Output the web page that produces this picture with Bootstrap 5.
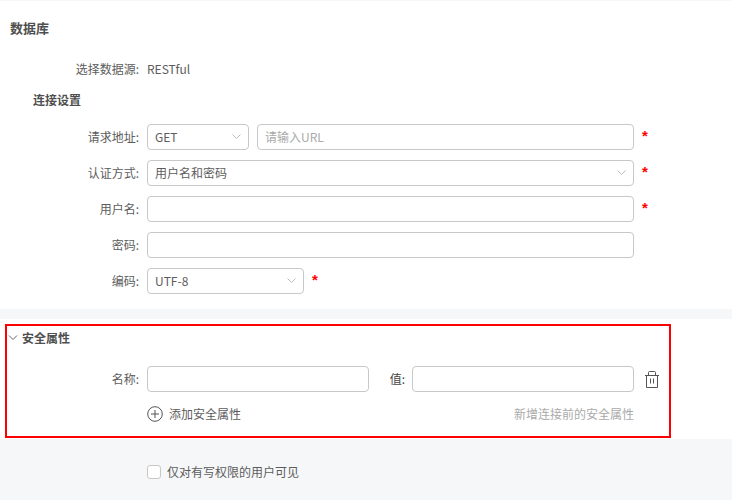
<!DOCTYPE html>
<html lang="zh">
<head>
<meta charset="utf-8">
<title>数据库</title>
<link rel="stylesheet" href="https://cdn.jsdelivr.net/npm/bootstrap@5.3.0/dist/css/bootstrap.min.css">
<style>
html,body{height:500px;overflow:hidden}
body{background:#f6f7f9;font-family:"Noto Sans CJK SC","Noto Sans",sans-serif;font-size:12px;color:#5c5c5c;line-height:18px;padding-top:1px}
.panel-top{background:#fff;height:308px;padding:0 10px;margin-bottom:10px}
.page-title{font-size:13px;font-weight:700;color:#4f4f4f;height:18px;line-height:18px;padding-top:18px;box-sizing:content-box;margin:0}
.form-line{display:flex;align-items:center;height:26px;margin-bottom:10px}
.lbl{width:129px;text-align:right;margin-right:8px;flex:none}
.ctl{height:26px;border:1px solid #c8c8c8;border-radius:4px;background:#fff;padding:0 7px;font-size:12px;line-height:24px;color:#5c5c5c;display:flex;align-items:center;justify-content:space-between;flex:none}
.w-full{width:487px}.w-get{width:102px;margin-right:8px}.w-url{width:377px;color:#aaa}.w-half{width:222px}.w-enc{width:157px}
.req{color:#f00;margin-left:8px;font-family:"Liberation Sans",sans-serif;font-size:15px;font-weight:700;line-height:15px;height:15px;margin-top:-3px}
.info-line{height:18px;margin-top:23px;margin-bottom:15px;display:flex;align-items:center}
.sub-title{font-weight:700;color:#4f4f4f;height:18px;margin:0 0 13px 23px;font-size:12px}
.sec-wrap{background:#fff;height:120px;padding-top:5px}
.red-box{width:666px;height:114px;margin-left:5px;border:2px solid #f00}
.sec-head{display:flex;align-items:center;height:18px;margin-top:3px;font-weight:700;color:#4f4f4f}
.sec-head svg{margin:0 4px 0 1px}
.sec-row{display:flex;align-items:center;height:26px;margin-top:19px}
.sec-row .lbl{width:132px}
.val-lbl{width:36px;text-align:right;margin-right:7px;color:#444}
.add-row{display:flex;align-items:center;height:20px;margin-top:12px;padding-left:140px;justify-content:space-between;width:627px}
.add-link{display:flex;align-items:center;gap:6px}
.hint{color:#aaa}
.chk-line{display:flex;align-items:center;padding-left:147px;margin-top:24px;gap:6px}
.chk-box{width:14px;height:14px;border:1px solid #c8c8c8;border-radius:3px;background:#fff}
.trash{margin-left:11px}
</style>
</head>
<body>
<div class="panel-top">
  <h1 class="page-title">数据库</h1>
  <div class="info-line"><span class="lbl">选择数据源:</span><span>RESTful</span></div>
  <h2 class="sub-title">连接设置</h2>
  <div class="form-line"><span class="lbl">请求地址:</span>
    <div class="ctl w-get"><span>GET</span><svg width="9" height="6" viewBox="0 0 9 6"><path d="M.5.5l4 4 4-4" fill="none" stroke="#bbb"/></svg></div>
    <div class="ctl w-url">请输入URL</div><span class="req">*</span></div>
  <div class="form-line"><span class="lbl">认证方式:</span>
    <div class="ctl w-full"><span>用户名和密码</span><svg width="9" height="6" viewBox="0 0 9 6"><path d="M.5.5l4 4 4-4" fill="none" stroke="#bbb"/></svg></div><span class="req">*</span></div>
  <div class="form-line"><span class="lbl">用户名:</span><div class="ctl w-full"></div><span class="req">*</span></div>
  <div class="form-line"><span class="lbl">密码:</span><div class="ctl w-full"></div></div>
  <div class="form-line"><span class="lbl">编码:</span>
    <div class="ctl w-enc"><span>UTF-8</span><svg width="9" height="6" viewBox="0 0 9 6"><path d="M.5.5l4 4 4-4" fill="none" stroke="#bbb"/></svg></div><span class="req">*</span></div>
</div>
<div class="sec-wrap">
  <div class="red-box">
    <div class="sec-head"><svg width="10" height="8" viewBox="0 0 10 8"><path d="M1 1.500l4 4 4-4" fill="none" stroke="#666"/></svg>安全属性</div>
    <div class="sec-row"><span class="lbl">名称:</span><div class="ctl w-half"></div>
      <span class="val-lbl">值:</span><div class="ctl w-half"></div>
      <svg class="trash" width="14" height="17" viewBox="0 0 14 17"><path d="M0 4.500h14M1.500 4.500v12h11v-12M3.500 4.500v-3a1 1 0 0 1 1-1h5a1 1 0 0 1 1 1v3M5.500 7.500v5M8.500 7.500v5" fill="none" stroke="#555"/></svg></div>
    <div class="add-row"><span class="add-link"><svg width="16" height="16" viewBox="0 0 16 16"><circle cx="8" cy="8" r="7.300" fill="none" stroke="#555"/><path d="M8 4v8M4 8h8" stroke="#555"/></svg>添加安全属性</span><span class="hint">新增连接前的安全属性</span></div>
  </div>
</div>
<div class="chk-line"><span class="chk-box"></span><span>仅对有写权限的用户可见</span></div>
<script src="https://cdn.jsdelivr.net/npm/bootstrap@5.3.0/dist/js/bootstrap.bundle.min.js"></script>
</body>
</html>
